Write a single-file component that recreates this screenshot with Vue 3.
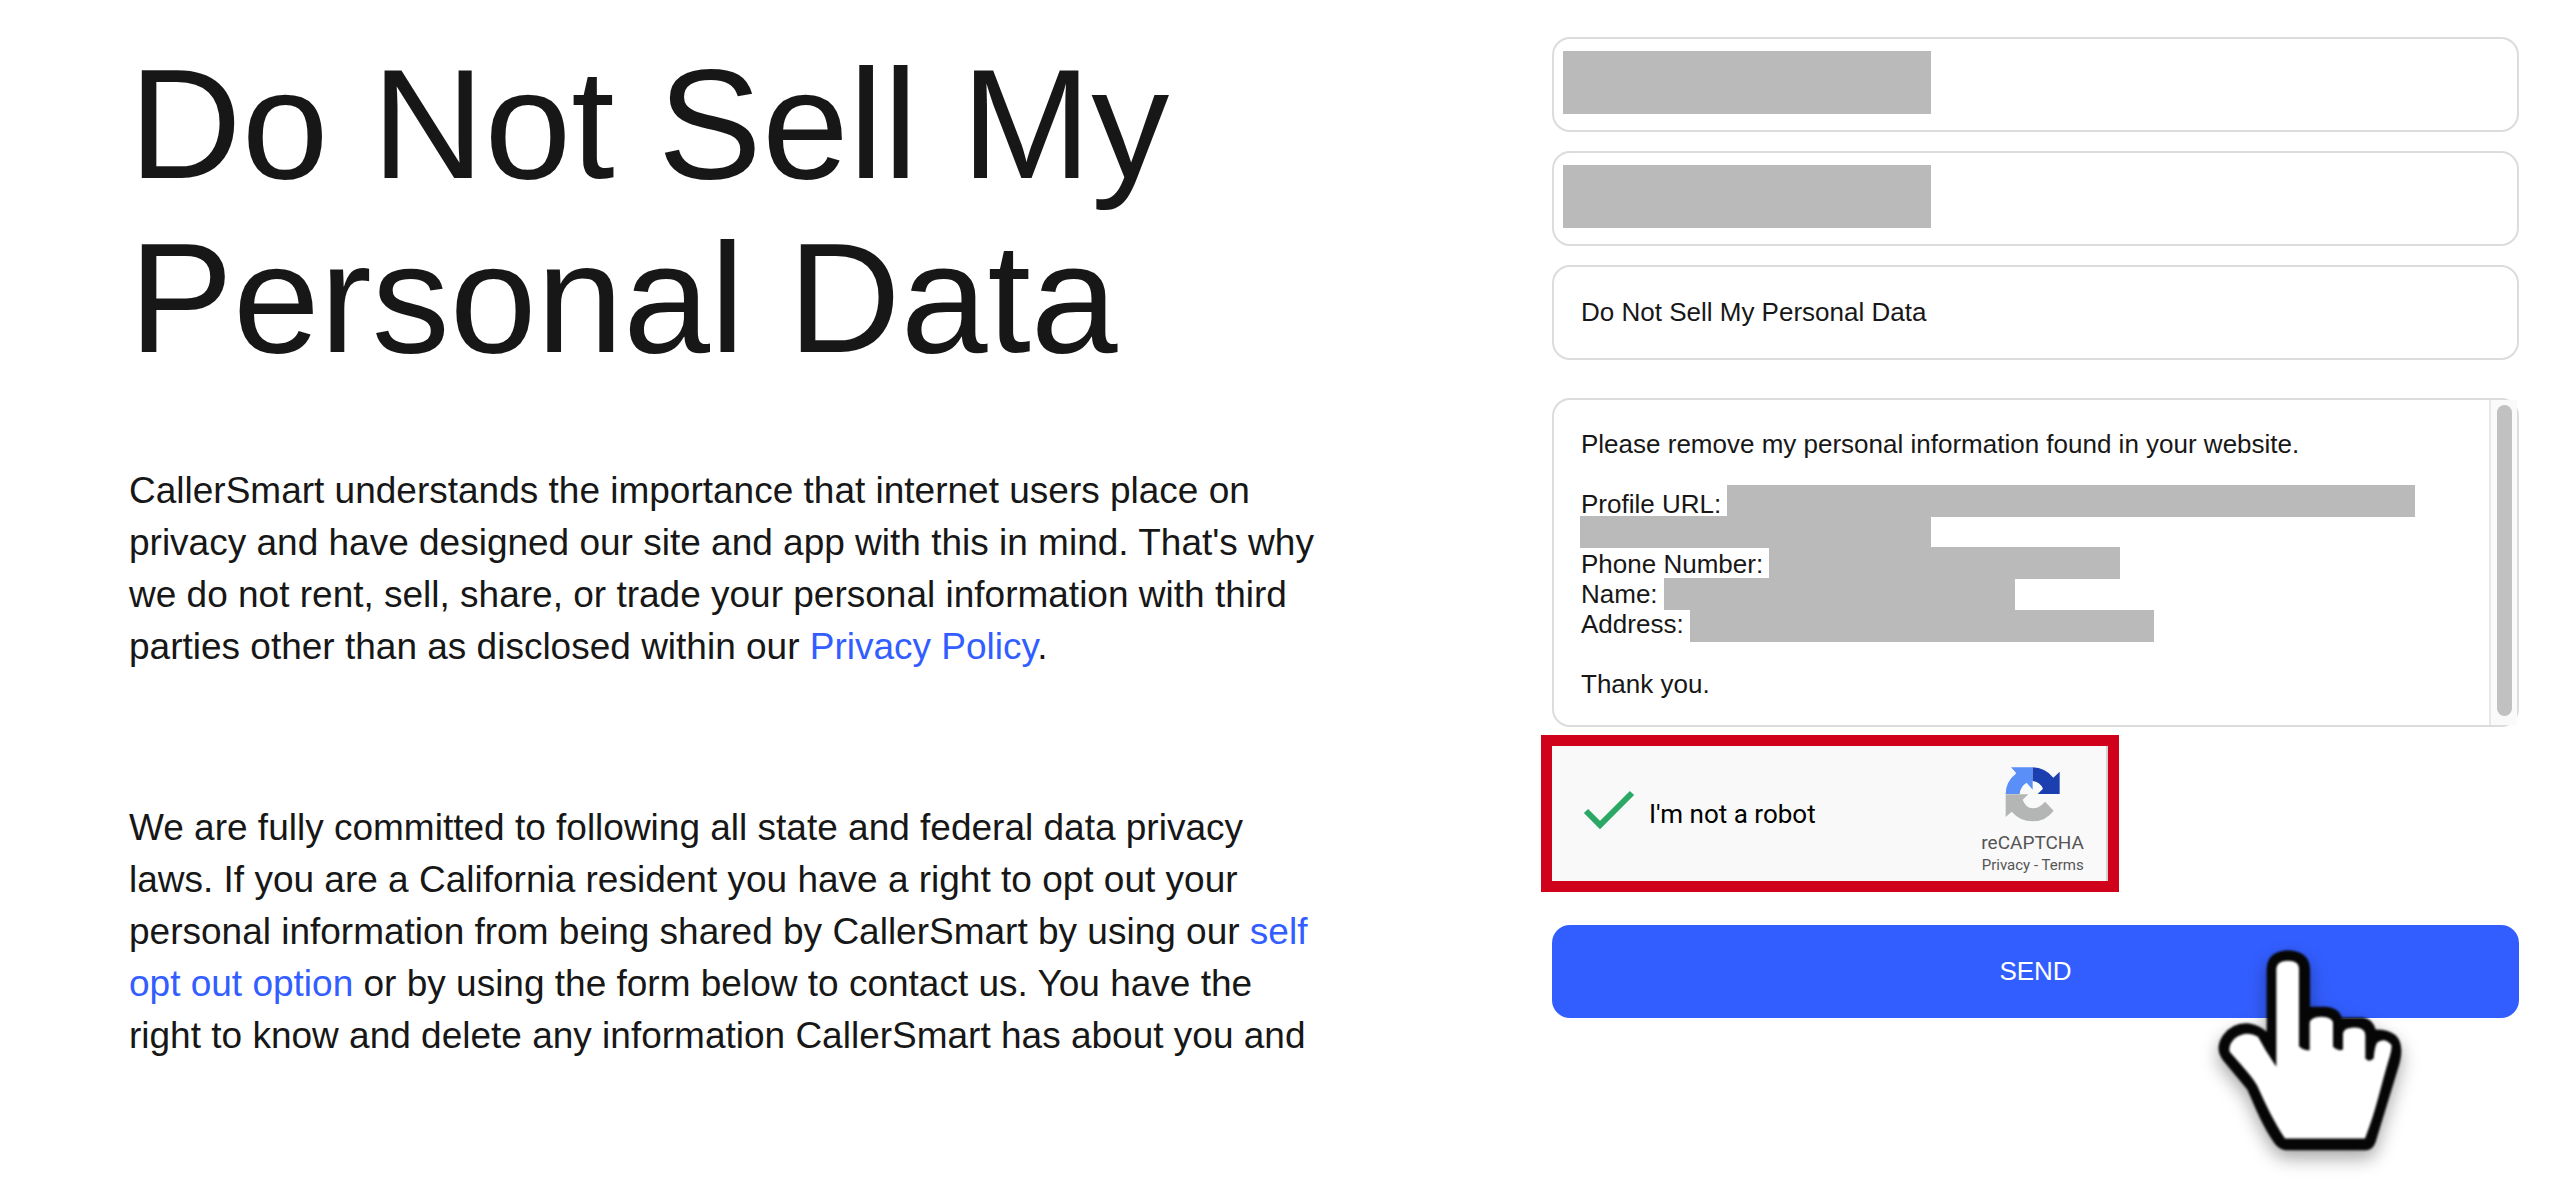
<script setup>
import { ref } from 'vue'

const name = ref('')
const email = ref('')
const subject = ref('Do Not Sell My Personal Data')
const message = ref(
  'Please remove my personal information found in your website.\n\nProfile URL:\n\nPhone Number:\nName:\nAddress:\n\nThank you.'
)
const human = ref(true)
</script>

<template>
  <main class="page">
    <section class="copy">
      <h1>Do Not Sell My<br />Personal Data</h1>
      <p>
        CallerSmart understands the importance that internet users place on<br />
        privacy and have designed our site and app with this in mind. That's why<br />
        we do not rent, sell, share, or trade your personal information with third<br />
        parties other than as disclosed within our <a href="#privacy">Privacy Policy</a>.
      </p>
      <p>
        We are fully committed to following all state and federal data privacy<br />
        laws. If you are a California resident you have a right to opt out your<br />
        personal information from being shared by CallerSmart by using our <a href="#optout">self<br />
        opt out option</a> or by using the form below to contact us. You have the<br />
        right to know and delete any information CallerSmart has about you and
      </p>
    </section>

    <form class="form" @submit.prevent>
      <div class="field">
        <input v-model="name" type="text" aria-label="Name" />
        <span class="mask mask-field"></span>
      </div>
      <div class="field">
        <input v-model="email" type="text" aria-label="Email" />
        <span class="mask mask-field"></span>
      </div>
      <div class="field">
        <input v-model="subject" type="text" aria-label="Subject" />
      </div>
      <div class="field message">
        <textarea v-model="message" aria-label="Message"></textarea>
        <span class="mask url"></span>
        <span class="mask url-rest"></span>
        <span class="mask phone"></span>
        <span class="mask person"></span>
        <span class="mask address"></span>
        <span class="track"><span class="thumb"></span></span>
      </div>

      <div class="captcha">
        <label class="check">
          <span class="tick">
            <input v-model="human" type="checkbox" />
            <svg v-if="human" viewBox="0 0 52 40" aria-hidden="true">
              <path d="M3 21 L17 35 L49 3" fill="none" stroke="#2ca866" stroke-width="6" />
            </svg>
          </span>
          I'm not a robot
        </label>
        <div class="brand">
          <svg viewBox="130 45 180 180" aria-hidden="true">
            <path fill="#5a8ff8" d="M154 55H219V122L201 101Q182 112 180 135H138Q138 98 170 73Z" />
            <path fill="#1c3fb0" d="M219 55Q256 56 281 86L300 68V135H234L250 119Q240 98 219 96Z" />
            <path fill="#b3b6b5" d="M138 136H206L189 152Q198 177 219 178Q240 177 256 158L282 185Q258 217 219 217Q180 216 156 188L138 204Z" />
          </svg>
          <span class="brand-name">reCAPTCHA</span>
          <span class="brand-links"><a href="#p">Privacy</a> - <a href="#t">Terms</a></span>
        </div>
      </div>

      <div class="send">
        <button type="submit">SEND</button>
        <svg class="hand" viewBox="40 60 720 740" aria-hidden="true">
          <path
            d="M261 335V145Q264 92 325 90Q388 92 391 145V260H440Q475 262 487 292H550Q578 295 588 328Q664 328 665 390Q665 415 655 445L588 665Q580 690 560 690H320Q300 690 285 670C250 620 230 570 203 508L130 420Q103 385 130 345Q160 305 210 310Q240 316 261 335Z"
            fill="#060606"
          />
          <path
            d="M290 440V145Q292 122 325 122Q358 122 358 145V378Q372 392 390 390V310Q392 290 425 290Q458 290 460 310V380Q475 395 490 388V340Q492 322 525 322Q556 322 557 345V415Q568 428 582 415Q585 380 592 368Q614 350 636 375Q636 390 630 410C605 490 590 570 556 655H316C280 600 262 560 232 495C210 460 180 430 150 395Q145 375 165 355Q200 330 235 350Q256 390 280 425Z"
            fill="#fff"
          />
        </svg>
      </div>
    </form>
  </main>
</template>

<style>
body {
  margin: 0;
  background: #fff;
}
</style>

<style scoped>
.page {
  display: grid;
  grid-template-columns: minmax(0, 1183fr) minmax(0, 967fr);
  column-gap: 240px;
  align-items: start;
  box-sizing: border-box;
  min-height: 100vh;
  padding: 37px 41px 40px 129px;
  font-family: 'Liberation Sans', Arial, sans-serif;
  color: #171717;
}
h1 {
  margin: 0 0 80px;
  font-size: 156px;
  line-height: 174px;
  font-weight: 400;
  white-space: nowrap;
}
p {
  margin: 0 0 129px;
  font-size: 37px;
  line-height: 52px;
  white-space: nowrap;
}
p:last-child {
  margin-bottom: 0;
}
a {
  color: #335eff;
  text-decoration: none;
}
.form {
  display: flex;
  flex-direction: column;
  gap: 19px;
}
.field {
  position: relative;
  display: flex;
}
input[type='text'],
textarea {
  box-sizing: border-box;
  width: 100%;
  height: 95px;
  margin: 0;
  padding: 0 27px;
  border: 2px solid #dcdcdc;
  border-radius: 18px;
  background: #fff;
  color: #171717;
  font-family: inherit;
  font-size: 26px;
  outline: none;
}
.message {
  margin-top: 19px;
}
textarea {
  height: 329px;
  padding: 29px 27px 0;
  line-height: 30px;
  resize: none;
  overflow: hidden;
}
.mask {
  position: absolute;
  height: 32px;
  background: #bababa;
}
.mask-field {
  top: 14px;
  left: 11px;
  width: 368px;
  height: 63px;
}
.url {
  top: 87px;
  left: 175px;
  right: 104px;
}
.url-rest {
  top: 118px;
  left: 28px;
  width: 351px;
}
.phone {
  top: 149px;
  left: 217px;
  width: 351px;
}
.person {
  top: 180px;
  left: 112px;
  width: 351px;
}
.address {
  top: 212px;
  left: 138px;
  width: 464px;
}
.track {
  position: absolute;
  top: 2px;
  right: 2px;
  bottom: 2px;
  box-sizing: border-box;
  width: 28px;
  padding: 5px 5px 9px 6px;
  border-left: 2px solid #e8e8e8;
  background: #fafafa;
}
.thumb {
  display: block;
  height: 100%;
  border-radius: 8px;
  background: #c1c1c1;
}
.captcha {
  display: flex;
  justify-content: space-between;
  box-sizing: border-box;
  width: 556px;
  height: 135px;
  padding: 0 22px 0 31px;
  border-right: 2px solid #d3d3d3;
  background: #f9f9f9;
  outline: 11px solid #d0021b;
  font-family: Roboto, sans-serif;
}
.check {
  display: flex;
  align-items: center;
  gap: 14px;
  color: #000;
  font-size: 26px;
}
.tick {
  position: relative;
  width: 52px;
  height: 48px;
}
.tick input {
  position: absolute;
  inset: 0;
  width: 100%;
  height: 100%;
  margin: 0;
  appearance: none;
}
.tick svg {
  display: block;
  width: 52px;
  height: 40px;
}
.brand {
  display: flex;
  flex-direction: column;
  align-items: center;
  padding-top: 18px;
  color: #555;
}
.brand svg {
  width: 60px;
  height: 60px;
  margin-bottom: 6px;
}
.brand-name {
  font-size: 19px;
  line-height: 26px;
}
.brand-links {
  font-size: 15px;
  line-height: 18px;
}
.brand a {
  color: inherit;
}
.send {
  position: relative;
  margin-top: 25px;
}
button {
  display: block;
  width: 100%;
  height: 93px;
  padding: 0;
  border: 0;
  border-radius: 18px;
  background: #335eff;
  color: #fff;
  font-family: inherit;
  font-size: 26px;
}
.hand {
  position: absolute;
  top: 15px;
  right: 86px;
  width: 240px;
  height: 247px;
  pointer-events: none;
  filter: blur(1px) drop-shadow(0 8px 9px rgba(0, 0, 0, 0.35));
}
</style>
